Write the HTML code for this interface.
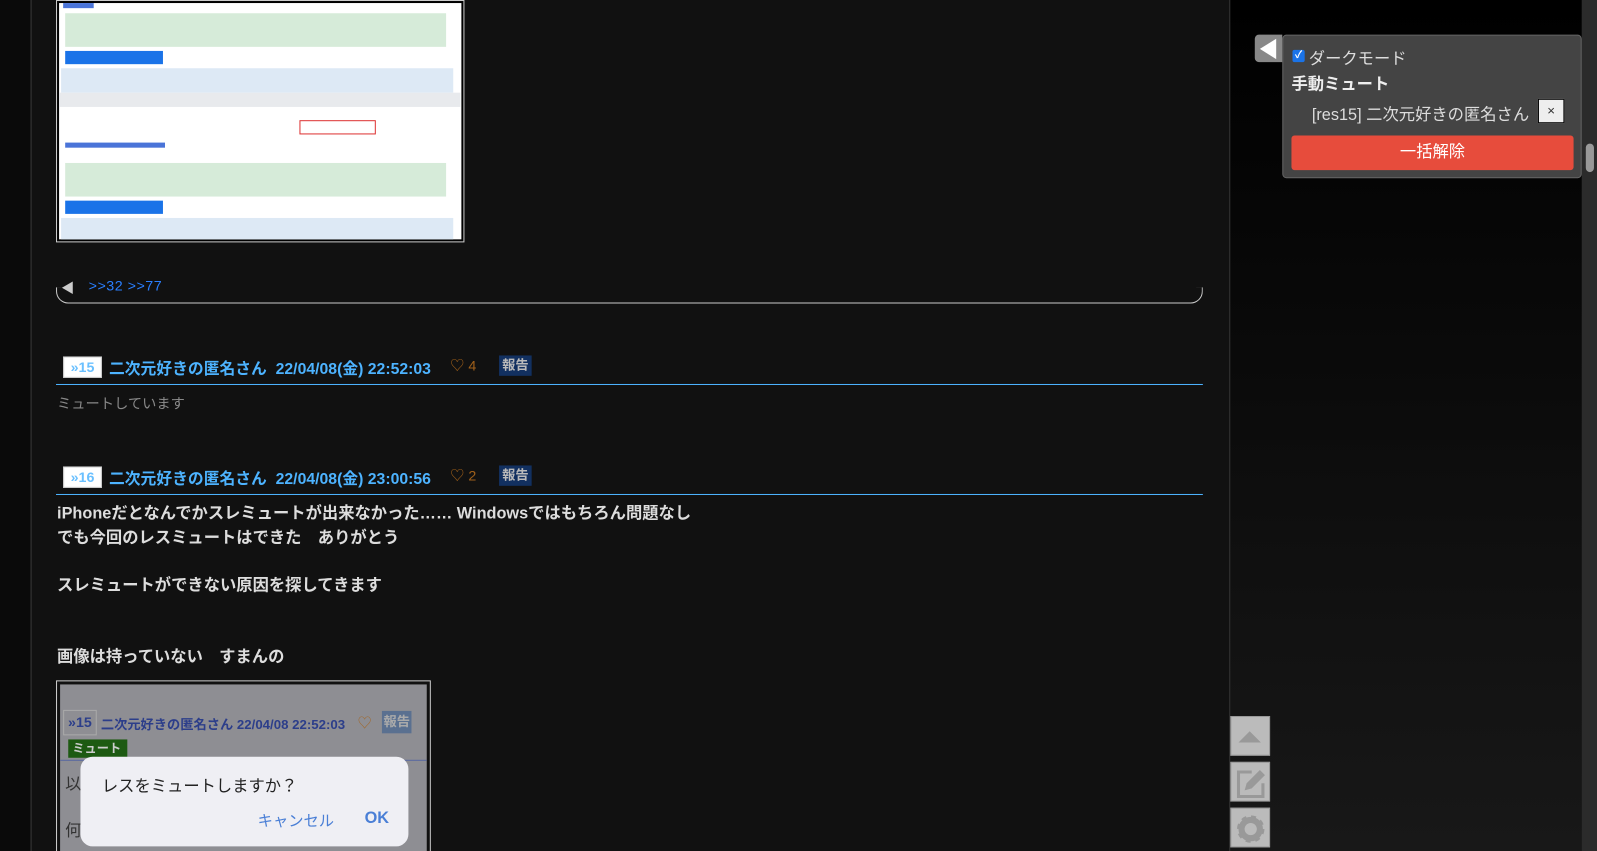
<!DOCTYPE html>
<html style="overflow:hidden;height:851px"><head><meta charset="utf-8"><style>
*{margin:0;padding:0;box-sizing:border-box}
body{width:1597px;height:851px;overflow:hidden;background:#0a0a0a;font-family:"Liberation Sans","Noto Sans CJK JP",sans-serif}
#clip{position:relative;width:1597px;height:851px;overflow:hidden}
#w{position:absolute;left:0;top:0;width:1568px;height:836px;transform:scale(1.0185);transform-origin:0 0}
.a{position:absolute}
#main{left:30px;top:0;width:1178px;height:836px;background:#111;border-left:1px solid #3a3a3a;border-right:1px solid #3a3a3a}
#right{left:1208px;top:0;width:345px;height:836px;background:linear-gradient(#000,#181818)}
#sb{left:1553px;top:0;width:15px;height:836px;background:#2b2b2b}
.hdr{font-weight:bold;color:#4db3ff;font-size:15.5px;white-space:nowrap}
.num{background:#fff;border:1px solid #ccc;color:#6ac0ff;font-size:14px;font-weight:bold;width:38px;height:21px;line-height:19px;text-align:center}
.rep{background:#123060;color:#bbb;font-size:13px;font-weight:bold;padding:0 3px;height:20px;line-height:20px}
.body{color:#ddd;font-weight:bold;font-size:16px;line-height:23.5px}
.btn{left:1208px;width:39px;height:39px;background:#bbb;border:1px solid #999}
.ln{height:1.4px;background:#4db3ff}
</style></head><body><div id="clip"><div id="w">
<div class="a" id="main"></div>
<div class="a" id="right"></div>
<div class="a" id="sb"><div class="a" style="left:4px;top:141px;width:8px;height:28px;background:#999;border-radius:4px"></div></div>

<div class="a" style="left:55px;top:0;width:401px;height:238px;border:1px solid #ccc;background:#000;padding:2px">
 <div style="width:100%;height:100%;background:#fff;position:relative;overflow:hidden">
  <div class="a" style="left:4px;top:0;width:30px;height:5px;background:#4a74d8"></div>
  <div class="a" style="left:6px;top:10px;width:374px;height:33px;background:#d6ebd9"></div>
  <div class="a" style="left:6px;top:47px;width:96px;height:13px;background:#1a73e8"></div>
  <div class="a" style="left:2px;top:64px;width:385px;height:24px;background:#dde9f5"></div>
  <div class="a" style="left:0;top:88px;width:394px;height:14px;background:#e8eaed"></div>
  <div class="a" style="left:236px;top:115px;width:75px;height:14px;border:1px solid #d33"></div>
  <div class="a" style="left:6px;top:137px;width:98px;height:5px;background:#4a74d8"></div>
  <div class="a" style="left:6px;top:157px;width:374px;height:33px;background:#d6ebd9"></div>
  <div class="a" style="left:6px;top:194px;width:96px;height:13px;background:#1a73e8"></div>
  <div class="a" style="left:2px;top:211px;width:385px;height:24px;background:#dde9f5"></div>
 </div>
</div>
<div class="a" style="left:60px;top:272px;color:#ccc;font-size:13px">◀</div>
<div class="a" style="left:87px;top:272px;color:#2a7fff;font-size:14px;letter-spacing:0.5px">&gt;&gt;32 &gt;&gt;77</div>
<div class="a" style="left:55px;top:282px;width:1126px;height:16px;border:1px solid #ccc;border-top:none;border-radius:0 0 12px 12px"></div>

<div class="a num" style="left:62px;top:350px">»15</div>
<div class="a hdr" style="left:107px;top:350px">二次元好きの匿名さん&nbsp; 22/04/08(金) 22:52:03</div>
<div class="a" style="left:442px;top:349px;color:#a0601a;font-size:14px">♡ 4</div>
<div class="a rep" style="left:490px;top:349px">報告</div>
<div class="a ln" style="left:55px;top:377px;width:1126px"></div>
<div class="a" style="left:56px;top:386px;color:#888;font-size:14px">ミュートしています</div>

<div class="a num" style="left:62px;top:458px">»16</div>
<div class="a hdr" style="left:107px;top:458px">二次元好きの匿名さん&nbsp; 22/04/08(金) 23:00:56</div>
<div class="a" style="left:442px;top:457px;color:#a0601a;font-size:14px">♡ 2</div>
<div class="a rep" style="left:490px;top:457px">報告</div>
<div class="a ln" style="left:55px;top:485px;width:1126px"></div>
<div class="a body" style="left:56px;top:493px">iPhoneだとなんでかスレミュートが出来なかった…… Windowsではもちろん問題なし<br>でも今回のレスミュートはできた　ありがとう<br><br>スレミュートができない原因を探してきます<br><br><br>画像は持っていない　すまんの</div>

<div class="a" style="left:55px;top:668px;width:368px;height:200px;border:1px solid #ccc;background:#111;padding:3px">
 <div style="width:100%;height:100%;background:#8e8e93;position:relative;overflow:hidden">
  <div class="a" style="left:3px;top:25px;width:33px;height:25px;border:1px solid #aaa;color:#2c3e8a;font-weight:bold;font-size:14px;line-height:23px;text-align:center">»15</div>
  <div class="a" style="left:40px;top:29px;color:#2c3e8a;font-weight:bold;font-size:13px;white-space:nowrap">二次元好きの匿名さん 22/04/08 22:52:03</div>
  <div class="a" style="left:292px;top:28px;color:#a06a30;font-size:14px">♡</div>
  <div class="a" style="left:316px;top:26px;width:29px;height:22px;background:#5a7090;color:#aaa;font-weight:bold;font-size:13px;text-align:center;line-height:22px">報告</div>
  <div class="a" style="left:8px;top:54px;width:58px;height:18px;background:#1d5a12;color:#ccc;font-weight:bold;font-size:12px;padding-left:4px;line-height:18px">ミュート</div>
  <div class="a" style="left:0;top:74px;width:100%;height:1px;background:#5868a0"></div>
  <div class="a" style="left:5px;top:84px;color:#333;font-size:16px">以</div>
  <div class="a" style="left:5px;top:130px;color:#333;font-size:16px">何</div>
  <div class="a" style="left:20px;top:71px;width:322px;height:88px;background:#efeff4;border-radius:12px">
   <div class="a" style="left:21px;top:15px;color:#222;font-size:16px">レスをミュートしますか？</div>
   <div class="a" style="left:174px;top:52px;color:#4a7fd6;font-size:15px">キャンセル</div>
   <div class="a" style="left:279px;top:52px;color:#4a7fd6;font-size:16px;font-weight:bold">OK</div>
  </div>
 </div>
</div>

<div class="a" style="left:1232px;top:34px;width:27px;height:27px;background:#888;border-radius:4px 0 0 4px"><div class="a" style="left:5px;top:4px;border-right:16px solid #fff;border-top:10px solid transparent;border-bottom:10px solid transparent"></div></div>
<div class="a" style="left:1259px;top:34px;width:294px;height:141px;background:#444;border:1px solid #666;border-radius:4px">
 <div class="a" style="left:9px;top:14px;width:12px;height:12px;background:#1a73e8;border-radius:2px;color:#fff;font-size:10px;line-height:12px;text-align:center;font-weight:bold">✓</div>
 <div class="a" style="left:25px;top:9px;color:#ddd;font-size:16px">ダークモード</div>
 <div class="a" style="left:8px;top:34px;color:#eee;font-size:16px;font-weight:bold">手動ミュート</div>
 <div class="a" style="left:28px;top:64px;color:#ddd;font-size:16px">[res15] 二次元好きの匿名さん</div>
 <div class="a" style="left:250px;top:62px;width:26px;height:24px;background:#eee;border:1px solid #000;color:#333;text-align:center;line-height:22px;font-size:13px">×</div>
 <div class="a" style="left:8px;top:98px;width:277px;height:34px;background:#e74c3c;border-radius:3px;color:#fff;font-size:16px;text-align:center;line-height:34px">一括解除</div>
</div>

<div class="a btn" style="top:703px"><div class="a" style="left:7px;top:14px;border-bottom:11px solid #999;border-left:11px solid transparent;border-right:11px solid transparent"></div></div>
<div class="a btn" style="top:748px"><svg width="39" height="39" style="position:absolute;left:0;top:0"><path d="M20 9H7v24h24V20" fill="none" stroke="#999" stroke-width="3"/><path d="M13 27l2-7 13-13 5 5-13 13z" fill="#999"/></svg></div>
<div class="a btn" style="top:793px"><svg width="39" height="39" style="position:absolute;left:0;top:0"><circle cx="19" cy="20" r="10" fill="none" stroke="#999" stroke-width="7" stroke-dasharray="4 3.85"/><circle cx="19" cy="20" r="9" fill="none" stroke="#999" stroke-width="6"/></svg></div>
</div></div></body></html>
